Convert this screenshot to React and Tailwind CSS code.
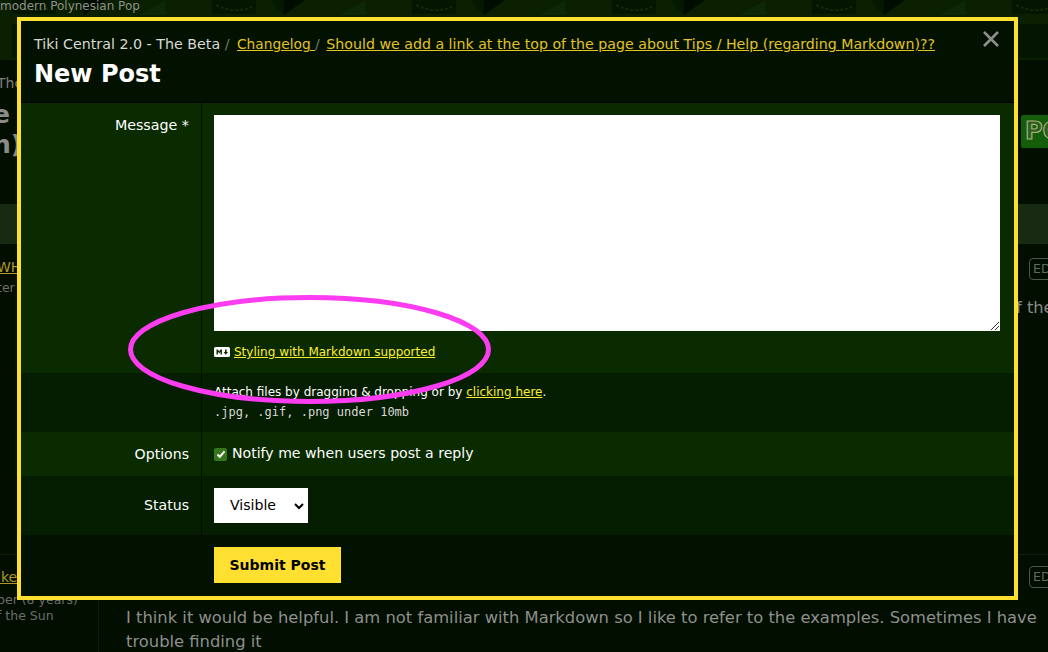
import React from 'react';

const verdana = { fontFamily: '"DejaVu Sans", sans-serif' };
const repeats = [-200, 0, 200, 400, 600, 800, 1000];

function EdBadge() {
  return <span className="block w-[40px] h-[22px] shrink-0 border border-[#4a5a44] rounded-[4px] text-[12.5px] leading-[20px] pl-[3px] text-[#5f6b59]">ED</span>;
}

function Backdrop() {
  return (
    <div className="w-[1100px] h-[652px] overflow-hidden bg-[#010e00] text-[#8a8a88]">
      <div className="h-[60px] bg-[#0a2000] relative overflow-hidden">
        <svg className="absolute inset-0" width="1100" height="60">
          {repeats.map((x) => (
            <g key={x}>
              <rect x={x + 12} y="0" width="44" height="14" fill="#051600" />
              <path d={`M${x + 16} 5q18 9 36 2`} fill="none" stroke="#122b09" strokeWidth="2" strokeDasharray="3 2" />
              <path d={`M${x + 70} 0L${x + 84} 15V0z`} fill="#051800" />
              <path d={`M${x + 84} 15L${x + 105} 0H${x + 84}z`} fill="#010c00" />
              <path d={`M${x + 140} 15L${x + 165} 0V15z`} fill="#0d2804" />
              <path d={`M${x + 12} 24h44v34h-44z`} fill="#051600" />
              <path d={`M${x + 64} 60L${x + 84} 30L${x + 104} 60z`} fill="#041400" />
            </g>
          ))}
        </svg>
        <p className="relative -mt-[3px] text-[12px] whitespace-nowrap text-[#8f8f8c]">modern Polynesian Pop</p>
      </div>

      <div className="h-[144px] flex items-start bg-[#010e00]">
        <div className="w-[200px] shrink-0">
          <p className="-ml-[3px] mt-[15px] text-[14px] leading-[17px] text-[#7c7c7a]">The</p>
          <p className="-ml-[7px] mt-[8px] text-[25px] leading-[30px] font-bold text-[#8b8b89]">e<br />n)</p>
        </div>
        <div className="ml-[821px] mt-[55px] h-[33px] w-[60px] shrink-0 bg-[#155c0b] rounded-[2px] text-[24px] font-bold leading-[33px] text-[#2b5e1c] pl-[4px]" style={{ WebkitTextStroke: '1.2px #a3b07c' }}>PO</div>
      </div>

      <div className="h-[41px] bg-[#182a12] border-b border-[#020a00]"></div>

      <div className="h-[310px] flex items-start border-b border-[#0c1f08]">
        <div className="w-[1029px] shrink-0 pt-[13px]">
          <a className="block -ml-[3px] text-[14px] leading-[18px] underline text-[#b0962a]">WH</a>
          <p className="-ml-[3px] mt-[4px] text-[12.5px] leading-[16px] text-[#6d6d6b]">ter</p>
        </div>
        <div className="shrink-0 pt-[13px]">
          <EdBadge />
          <p className="-ml-[13px] mt-[16px] text-[16.3px] leading-[24px] whitespace-nowrap text-[#8a8a88]">f the</p>
        </div>
      </div>

      <div className="h-[97px] flex items-start">
        <div className="w-[99px] h-full shrink-0 border-r border-[#0c1f08] pt-[13px]">
          <a className="block -ml-[3px] text-[14px] leading-[18px] underline text-[#b0962a]">ike</a>
          <p className="-ml-[3px] mt-[6px] text-[12.5px] leading-[16px] whitespace-nowrap text-[#6d6d6b]">ber (8 years)<br />f the Sun</p>
        </div>
        <p className="ml-[27px] mt-[51px] w-[915px] shrink-0 text-[16.35px] leading-[24px] text-[#8f8f8d]">I think it would be helpful. I am not familiar with Markdown so I like to refer to the examples. Sometimes I have trouble finding it</p>
        <div className="-ml-[12px] mt-[11px] shrink-0"><EdBadge /></div>
      </div>
    </div>
  );
}

function Label({ children }) {
  return <div className="w-[181px] shrink-0 border-r border-[#020c00] pr-[12px] text-right text-[14.1px] text-white">{children}</div>;
}

export default function App() {
  return (
    <div className="relative w-[1048px] h-[652px] overflow-hidden" style={verdana}>
      <Backdrop />

      <div className="absolute left-[17px] top-[17px] w-[1001px] h-[583px] border-[4px] border-[#ffdf30] bg-[#021100] flex flex-col">
        <div className="h-[82px] shrink-0 border-b border-black pl-[13px] pt-[13px] relative">
          <p className="text-[14.25px] leading-[20px] whitespace-nowrap text-[#d9d9d6]">
            Tiki Central 2.0 - The Beta <span className="text-[#6f7a68]">/</span> <a className="ml-[3px] text-[13.75px] underline text-[#e2c420]">Changelog </a><span className="text-[#6f7a68]">/</span> <a className="ml-[2px] text-[14.18px] underline text-[#e2c420]">Should we add a link at the top of the page about Tips / Help (regarding Markdown)??</a>
          </p>
          <h1 className="mt-[5px] text-[24px] leading-[30px] font-bold text-white">New Post</h1>
          <button className="absolute right-[15px] top-[10px] text-[#8c8f8a]">
            <svg width="16" height="16" viewBox="0 0 16 16" stroke="currentColor" strokeWidth="2.6" fill="none">
              <path d="M1 1l14 14M15 1L1 15" />
            </svg>
          </button>
        </div>

        <div className="h-[270px] shrink-0 flex bg-[#0a2a00]">
          <div className="w-[181px] shrink-0 border-r border-[#020c00] pr-[12px] pt-[12px] text-right text-[14.25px] leading-[20px] text-white">Message *</div>
          <div className="pl-[12px] pt-[12px] flex-1">
            <div className="relative w-[786px] h-[216px] bg-white">
              <svg className="absolute right-[1px] bottom-[1px]" width="8" height="8" stroke="#333" strokeWidth="1">
                <path d="M0 8L8 0M4 8L8 4" />
              </svg>
            </div>
            <p className="mt-[13px] flex items-center gap-[4px] text-[12px] leading-[16px]">
              <svg width="16" height="10" viewBox="0 0 16 10">
                <rect width="16" height="10" rx="1.5" fill="#fff" />
                <path d="M2.5 7.5v-5h1.4l1.3 2 1.3-2h1.4v5H6.5V4.6L5.2 6.4 3.9 4.6v2.9zM11 2.5h1.6v2.6h1.4l-2.2 2.6-2.2-2.6H11z" fill="#0a2a00" />
              </svg>
              <a className="underline text-[#ffef2e]">Styling with Markdown supported</a>
            </p>
          </div>
        </div>

        <div className="h-[59px] shrink-0 flex bg-[#051d00]">
          <div className="w-[181px] shrink-0 border-r border-[#020c00]"></div>
          <div className="pl-[12px] pt-[10px]">
            <p className="text-[12px] leading-[18px] text-white">Attach files by dragging &amp; dropping or by <a className="underline text-[#ffef2e]">clicking here</a>.</p>
            <p className="mt-[2px] text-[12px] leading-[18px] text-[#d8d8d6]" style={{ fontFamily: '"DejaVu Sans Mono", monospace' }}>.jpg, .gif, .png under 10mb</p>
          </div>
        </div>

        <div className="h-[44px] shrink-0 flex items-stretch bg-[#0a2a00]">
          <Label><span className="leading-[44px]">Options</span></Label>
          <div className="pl-[12px] flex items-center gap-[5px] text-[14.1px] text-white">
            <span className="w-[13px] h-[13px] rounded-[2px] bg-[#38761d] flex items-center justify-center">
              <svg width="10" height="10" viewBox="0 0 10 10" fill="none" stroke="#fff" strokeWidth="2"><path d="M1.5 5.5l2.3 2.3 4.7-5.5" /></svg>
            </span>
            Notify me when users post a reply
          </div>
        </div>

        <div className="h-[59px] shrink-0 flex items-stretch bg-[#051d00]">
          <Label><span className="leading-[59px]">Status</span></Label>
          <div className="pl-[12px] flex items-center">
            <div className="w-[94px] h-[35px] bg-white flex items-center justify-between pl-[16px] pr-[3px] text-[14.1px] text-black">
              Visible
              <svg width="12" height="12" viewBox="0 0 12 12" fill="none" stroke="#000" strokeWidth="2"><path d="M2 4l4 4 4-4" /></svg>
            </div>
          </div>
        </div>

        <div className="flex-1 pl-[193px] pt-[12px]">
          <button className="w-[127px] h-[36px] bg-[#ffdf30] text-[14px] font-bold text-black">Submit Post</button>
        </div>
      </div>

      <svg className="absolute left-[120px] top-[290px] pointer-events-none" width="380" height="120" fill="none">
        <ellipse cx="189.5" cy="59.5" rx="179" ry="52" stroke="#fb3cf0" strokeWidth="5" />
      </svg>
    </div>
  );
}
